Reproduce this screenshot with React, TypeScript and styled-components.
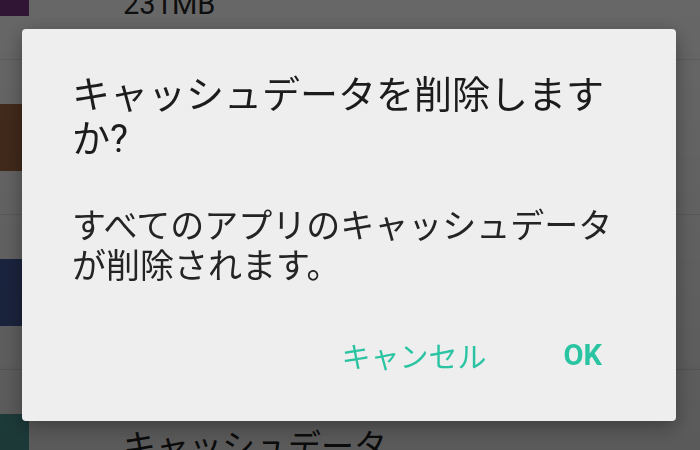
import styled, { createGlobalStyle } from "styled-components";

interface StorageItem {
  id: string;
  color: string;
  title: string;
  size?: string;
}

const items: Array<StorageItem> = [
  { id: "photos", color: "#763580", title: "写真と動画", size: "231MB" },
  { id: "audio", color: "#a36944", title: "音声", size: "48.2MB" },
  { id: "downloads", color: "#465da0", title: "ダウンロード", size: "12.6MB" },
  { id: "cache", color: "#4e9e9b", title: "キャッシュデータ" },
];

const GlobalStyle = createGlobalStyle`
  html, body {
    margin: 0;
    padding: 0;
    height: 100%;
    overflow: hidden;
    background: #fafafa;
  }
  body {
    font-family: Roboto, "Noto Sans CJK JP", sans-serif;
    -webkit-font-smoothing: antialiased;
  }
`;

const App = (): JSX.Element => {
  return (
    <>
      <GlobalStyle />
      <List>
        {items.map((item) => (
          <Row key={item.id}>
            <Thumb color={item.color} />
            <RowText>
              <RowTitle>{item.title}</RowTitle>
              {item.size && <RowSize>{item.size}</RowSize>}
            </RowText>
          </Row>
        ))}
      </List>
      <Scrim>
        <Dialog role="dialog">
          <Title>キャッシュデータを削除しますか?</Title>
          <Message>すべてのアプリのキャッシュデータが削除されます。</Message>
          <Actions>
            <ActionButton>キャンセル</ActionButton>
            <ActionButton $strong>OK</ActionButton>
          </Actions>
        </Dialog>
      </Scrim>
    </>
  );
};

export default App;

const List = styled.div`
  margin-top: -95px;
  height: calc(100vh + 95px);
  overflow: hidden;
  display: flex;
  flex-direction: column;
`;

const Row = styled.div`
  height: 155px;
  flex-shrink: 0;
  box-sizing: border-box;
  border-bottom: 1px solid #e2e2e2;
  display: flex;
  align-items: center;
  gap: 94px;
`;

const Thumb = styled.div<{ color: string }>`
  width: 29px;
  height: 67px;
  flex-shrink: 0;
  background-color: ${(p) => p.color};
`;

const RowText = styled.div`
  display: flex;
  flex-direction: column;
`;

const RowTitle = styled.div`
  font-size: 33px;
  line-height: 44px;
  color: #212121;
`;

const RowSize = styled.div`
  font-size: 29px;
  line-height: 40px;
  color: #262626;
`;

const Scrim = styled.div`
  position: fixed;
  inset: 0;
  background: linear-gradient(rgba(0, 0, 0, 0.59), rgba(0, 0, 0, 0.64));
  display: flex;
  align-items: center;
  padding-left: 22px;
`;

const Dialog = styled.div`
  width: 654px;
  box-sizing: border-box;
  padding: 44px 0 38px 50px;
  background: #eeeeee;
  border-radius: 4px;
  box-shadow: 0 6px 20px rgba(0, 0, 0, 0.35);
  display: flex;
  flex-direction: column;
`;

const Title = styled.h1`
  margin: 0;
  padding-right: 50px;
  font-size: 38px;
  font-weight: 400;
  line-height: 44px;
  color: #1c1c1c;
`;

const Message = styled.p`
  margin: 45px 0 0;
  padding-right: 50px;
  font-size: 34px;
  line-height: 40px;
  color: #242424;
`;

const Actions = styled.div`
  margin-top: 41px;
  height: 56px;
  display: flex;
  justify-content: flex-end;
  align-items: center;
  gap: 45px;
  padding-right: 58px;
`;

const ActionButton = styled.button<{ $strong?: boolean }>`
  height: 56px;
  padding: 0 16px;
  border: none;
  background: transparent;
  font-family: Roboto, "Noto Sans CJK JP", sans-serif;
  font-size: 29px;
  font-weight: ${(p) => (p.$strong ? 700 : 400)};
  color: #2bc4a3;
  cursor: pointer;
`;
